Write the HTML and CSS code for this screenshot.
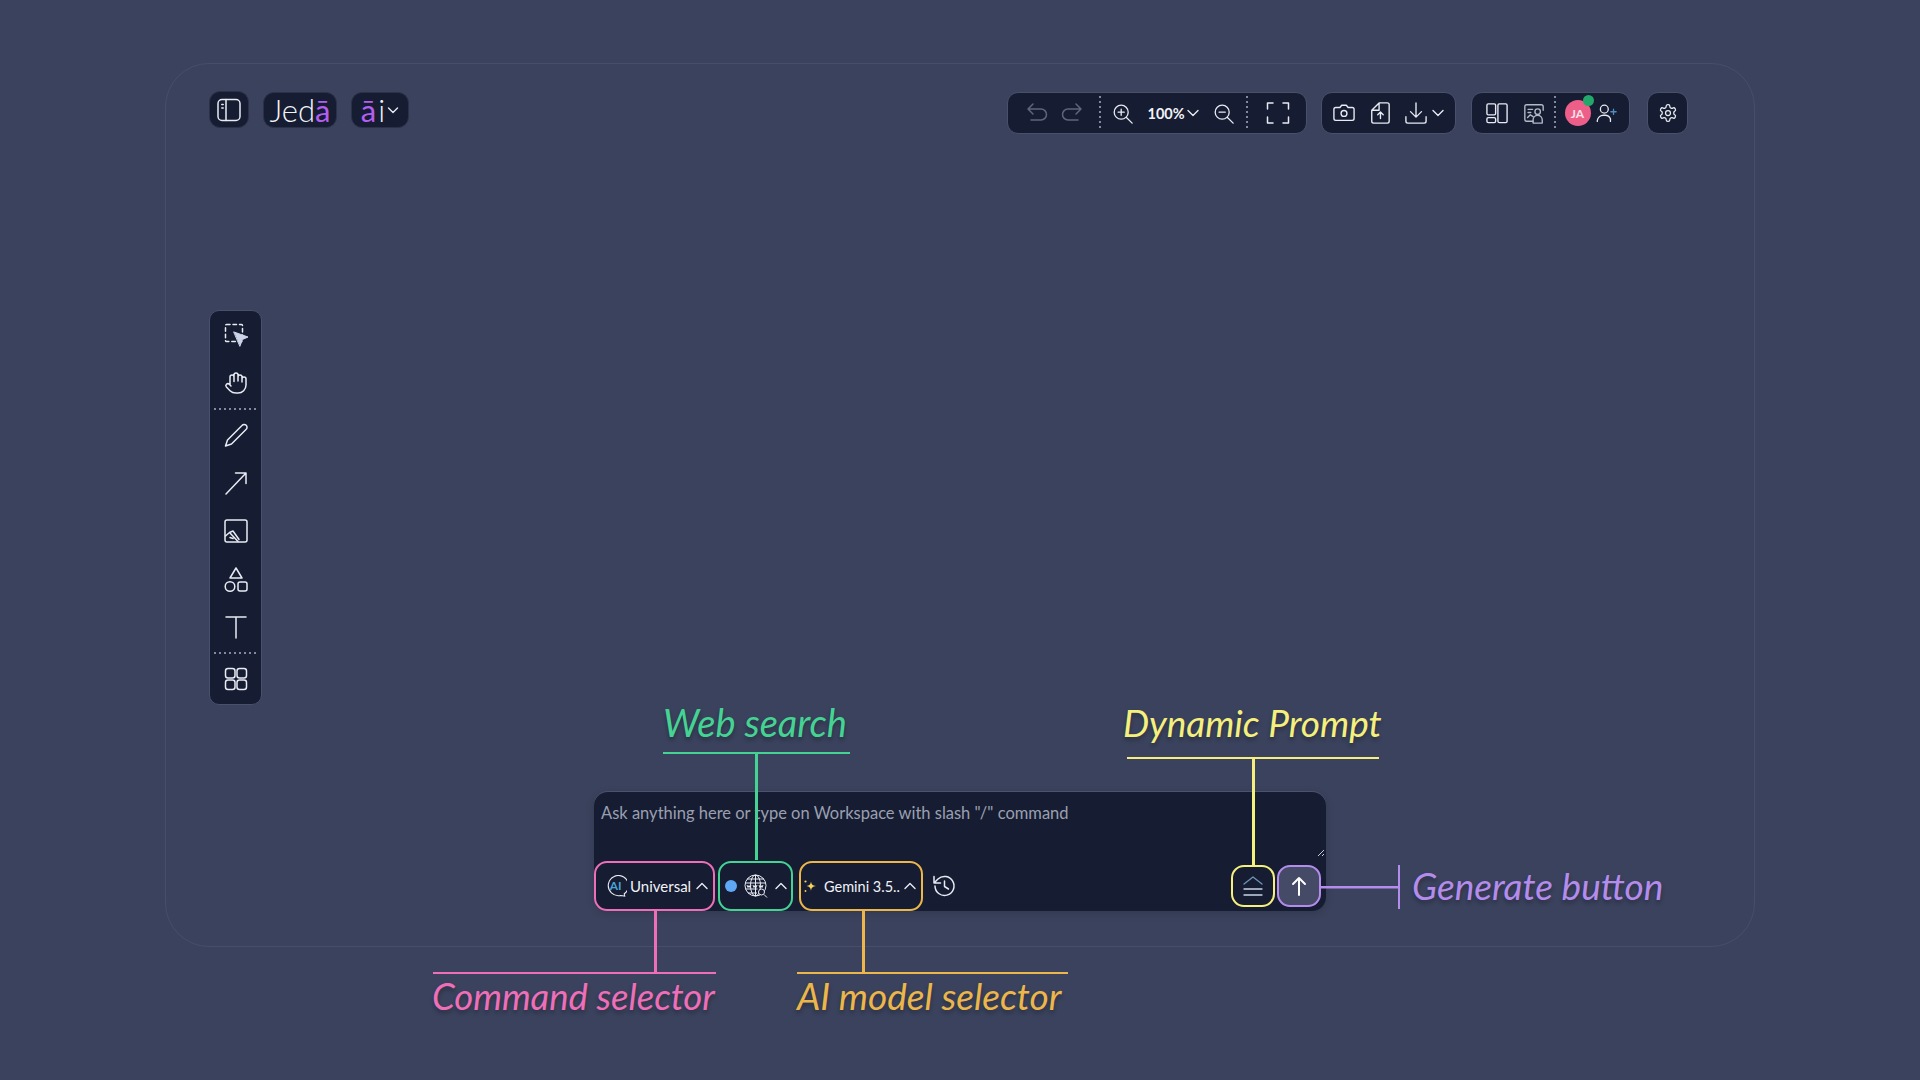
FILE: index.html
```html
<!DOCTYPE html>
<html lang="en">
<head>
  <meta charset="UTF-8" />
  <title>Jedā workspace</title>
  <link rel="stylesheet" href="styles.css">
</head>
<body>
  <div class="frame">

    <div class="header">
      <div class="header-left">
        <div class="panel square">
          <svg class="icon" viewBox="0 0 24 24"><rect x="1" y="1.500" width="22" height="21" rx="4"/><path d="M9 1.500v21M4.800 6.500h1.400M4.800 10h1.400"/></svg>
        </div>
        <div class="panel logo">Jed<span class="accent">ā</span></div>
        <div class="panel logo-ai"><span class="accent">ā</span>i
          <svg class="chev" viewBox="0 0 12 12"><path d="M1.500 4l4.500 4.500L10.500 4"/></svg>
        </div>
      </div>

      <div class="header-right">
        <div class="panel group group-view">
          <svg class="icon dim" viewBox="0 0 24 24"><path d="M8 3L3 8l5 5M3 8h13a5 5 0 0 1 0 11H6"/></svg>
          <svg class="icon dim redo" viewBox="0 0 24 24"><path d="M16 3l5 5-5 5M21 8H8a5 5 0 0 0 0 11h10"/></svg>
          <span class="sep"></span>
          <svg class="icon zoom" viewBox="0 0 24 24"><circle cx="10.500" cy="10.500" r="8"/><path d="M16.500 16.500L23 23M10.500 7v7M7 10.500h7"/></svg>
          <span class="zoom-value">100%</span>
          <svg class="chev" viewBox="0 0 12 12"><path d="M1 3.500L6 8.500l5-5"/></svg>
          <svg class="icon zoom zoom-out" viewBox="0 0 24 24"><circle cx="10.500" cy="10.500" r="8"/><path d="M16.500 16.500L23 23M7 10.500h7"/></svg>
          <span class="sep sep-end"></span>
          <svg class="icon" viewBox="0 0 24 24"><path d="M7 2H1.500v6M17 2h5.500v6M1.500 16v6H7M22.500 16v6H17"/></svg>
        </div>

        <div class="panel group group-file">
          <svg class="icon small" viewBox="0 0 24 24"><path d="M1 8a2 2 0 0 1 2-2h4.500l2-2.500h5l2 2.500H21a2 2 0 0 1 2 2v10a2 2 0 0 1-2 2H3a2 2 0 0 1-2-2z"/><circle cx="12" cy="12.500" r="3.200"/></svg>
          <svg class="icon tall" viewBox="0 0 24 24"><path d="M11 1H20a2 2 0 0 1 2 2v18a2 2 0 0 1-2 2H5a2 2 0 0 1-2-2V9zM11 1v8H3M12.500 18v-7M9.500 14l3-3 3 3"/></svg>
          <svg class="icon small" viewBox="0 0 24 24"><path d="M12 1v15M6 10.500l6 6 6-6M1 16v5a2 2 0 0 0 2 2h18a2 2 0 0 0 2-2v-5"/></svg>
          <svg class="chev" viewBox="0 0 12 12"><path d="M1 3.500L6 8.500l5-5"/></svg>
        </div>

        <div class="panel group group-people">
          <svg class="icon small" viewBox="0 0 24 24"><rect x="1" y="2" width="9.500" height="12" rx="1.500"/><rect x="1" y="17" width="9.500" height="5.500" rx="1.500"/><rect x="13" y="2" width="10" height="20.500" rx="1.500"/></svg>
          <svg class="icon small dimmer" viewBox="0 0 24 24"><path d="M11 21H4a2 2 0 0 1-2-2V5a2 2 0 0 1 2-2h16a2 2 0 0 1 2 2v4M5.500 8h5M5.500 11.500h3M5 17l3-3 3 2"/><circle cx="16" cy="10.500" r="3"/><path d="M11 23v-3.500a5 5 0 0 1 10 0V23z"/></svg>
          <span class="sep"></span>
          <div class="avatar">JA<span class="status"></span></div>
          <svg class="icon add-user" viewBox="0 0 24 24"><circle cx="9.500" cy="7" r="4.500"/><path d="M1.500 21v-1a7 7 0 0 1 7-6h2a7 7 0 0 1 6 4v3"/><path class="plus" d="M20 7v6M17 10h6"/></svg>
        </div>

        <div class="panel square-wide">
          <svg class="icon gear" viewBox="0 0 24 24"><path d="M12.220 2h-.440a2 2 0 0 0-2 2v.180a2 2 0 0 1-1 1.730l-.430.250a2 2 0 0 1-2 0l-.150-.080a2 2 0 0 0-2.730.730l-.220.380a2 2 0 0 0 .730 2.730l.150.100a2 2 0 0 1 1 1.720v.510a2 2 0 0 1-1 1.740l-.150.090a2 2 0 0 0-.730 2.730l.220.380a2 2 0 0 0 2.730.730l.150-.080a2 2 0 0 1 2 0l.430.250a2 2 0 0 1 1 1.730V20a2 2 0 0 0 2 2h.440a2 2 0 0 0 2-2v-.180a2 2 0 0 1 1-1.730l.430-.250a2 2 0 0 1 2 0l.150.080a2 2 0 0 0 2.730-.730l.220-.390a2 2 0 0 0-.730-2.730l-.150-.080a2 2 0 0 1-1-1.740v-.500a2 2 0 0 1 1-1.740l.150-.090a2 2 0 0 0 .730-2.730l-.220-.380a2 2 0 0 0-2.730-.730l-.150.080a2 2 0 0 1-2 0l-.430-.250a2 2 0 0 1-1-1.730V4a2 2 0 0 0-2-2z"/><circle cx="12" cy="12" r="3"/></svg>
        </div>
      </div>
    </div>

    <div class="sidebar panel">
      <div class="side-item">
        <svg class="icon" viewBox="0 0 24 24"><rect x="1.500" y="1.500" width="17" height="17" rx="1" stroke-dasharray="3.500 3"/><path class="solid" d="M10 9l14 5-5.500 2.500L16 23z"/></svg>
      </div>
      <div class="side-item">
        <svg class="icon" viewBox="0 0 24 24"><path d="M18 11V6a2 2 0 0 0-2-2 2 2 0 0 0-2 2M14 10V4a2 2 0 0 0-2-2 2 2 0 0 0-2 2v2M10 10.500V6a2 2 0 0 0-2-2 2 2 0 0 0-2 2v8M18 8a2 2 0 1 1 4 0v6a8 8 0 0 1-8 8h-2c-2.800 0-4.500-.860-5.990-2.340l-3.600-3.600a2 2 0 0 1 2.830-2.820L7 15"/></svg>
      </div>
      <div class="side-sep"></div>
      <div class="side-item">
        <svg class="icon" viewBox="0 0 24 24"><path d="M18 2.500a2.850 2.830 0 1 1 4 4L7.500 21 1.500 23l2-6z"/></svg>
      </div>
      <div class="side-item">
        <svg class="icon" viewBox="0 0 24 24"><path d="M2 23L22 2M11.500 2H22v10.500"/></svg>
      </div>
      <div class="side-item">
        <svg class="icon" viewBox="0 0 24 24"><rect x="1" y="1" width="22" height="22" rx="2"/><path d="M1.500 17l4-3.500 8.500 9M5.500 13.500l3.500-1.500 6 8.500M6 18.500l3 1"/></svg>
      </div>
      <div class="side-item">
        <svg class="icon shapes" viewBox="0 0 24 26"><path d="M12 1.500l6 10H6z"/><circle cx="6" cy="20" r="4.800"/><rect x="14" y="15.500" width="9" height="9" rx="2"/></svg>
      </div>
      <div class="side-item">
        <svg class="icon" viewBox="0 0 24 24"><path d="M2 2h20M12 2v21"/></svg>
      </div>
      <div class="side-sep"></div>
      <div class="side-item">
        <svg class="icon" viewBox="0 0 24 24"><rect x="1.500" y="1.500" width="9.500" height="9.500" rx="2.500"/><rect x="13" y="1.500" width="9.500" height="9.500" rx="2.500"/><rect x="1.500" y="13" width="9.500" height="9.500" rx="2.500"/><rect x="13" y="13" width="9.500" height="9.500" rx="2.500"/></svg>
      </div>
    </div>

    <div class="prompt">
      <div class="prompt-text">Ask anything here or type on Workspace with slash "/" command</div>
      <svg class="resize" viewBox="0 0 8 8"><path d="M1 7l6-6M5 7l2-2"/></svg>
      <div class="prompt-row">
        <div class="pill pill-command">
          <svg class="ai-badge" viewBox="0 0 24 24">
            <path d="M21 20.500A11 11 0 1 0 17 22.300L21.500 23z"/>
            <text x="11.500" y="16.500" text-anchor="middle">AI</text>
          </svg>
          <span>Universal</span>
          <svg class="chev" viewBox="0 0 12 12"><path d="M1 8.500L6 3.500l5 5"/></svg>
        </div>
        <div class="pill pill-web">
          <span class="dot"></span>
          <svg class="globe" viewBox="0 0 24 24"><circle cx="11.500" cy="11.500" r="10.500"/><path d="M11.500 1v21M3 5h17M1.500 9h20M1.500 15h12M4 19h9"/><ellipse cx="11.500" cy="11.500" rx="5" ry="10.500"/><path class="www" d="M3 11l1 2.500 1-2 1 2 1-2.500M9 11l1 2.500 1-2 1 2 1-2.500M15 11l1 2.500 1-2 1 2 1-2.500"/><circle class="lens" cx="17.500" cy="18" r="3"/><path d="M20 20.500l3 3"/></svg>
          <svg class="chev" viewBox="0 0 12 12"><path d="M1 8.500L6 3.500l5 5"/></svg>
        </div>
        <div class="pill pill-model">
          <svg class="sparkle" viewBox="0 0 14 14"><path d="M8 2.500c.5 3 1.500 4 5 4.500-3.500.5-4.500 1.500-5 5-.5-3.500-1.500-4.500-4.500-5 3-.5 4-1.500 4.500-4.500z"/><circle cx="2.500" cy="2.500" r="1.100"/><circle cx="2.500" cy="12" r=".9"/></svg>
          <span class="model-name">Gemini 3.5..</span>
          <svg class="chev" viewBox="0 0 12 12"><path d="M1 8.500L6 3.500l5 5"/></svg>
        </div>
        <svg class="icon history" viewBox="0 0 24 24"><path d="M3 12a9.500 9.500 0 1 0 3-7L2 9M2 2.500V9h6.500M12.500 7v5.500l4 2.500"/></svg>
        <div class="prompt-actions">
          <div class="action action-dynamic">
            <svg class="icon" viewBox="0 0 24 24"><path class="chevron-blue" d="M3 10l9-7 9 7"/><path d="M3 15h18M3 21h18"/></svg>
          </div>
          <div class="action action-generate">
            <svg class="icon" viewBox="0 0 24 24"><path d="M12 21V4M6 10l6-6 6 6"/></svg>
          </div>
        </div>
      </div>
    </div>

    <!-- callouts on top of the prompt box -->
    <div class="note note-web">Web search</div>
    <div class="stem stem-web"></div>
    <div class="note note-dynamic">Dynamic Prompt</div>
    <div class="stem stem-dynamic"></div>
    <div class="note note-command">Command selector</div>
    <div class="stem stem-command"></div>
    <div class="note note-model">AI model selector</div>
    <div class="stem stem-model"></div>
    <div class="generate-link"></div>
    <div class="note note-generate">Generate button</div>

  </div>
</body>
</html>
```

FILE: styles.css
```css
* {
  box-sizing: border-box;
}

body {
  font-family: Lato, "Open Sans", sans-serif;
  margin: 0;
  padding: 63px 0 0 165px;
  width: 1920px;
  height: 1080px;
  overflow: hidden;
  background-color: #3a425d;
}

.frame {
  position: relative;
  width: 1590px;
  height: 884px;
  padding: 28px 66px 0 43px;
  border: 1px solid #464e69;
  border-radius: 44px;
}

.panel {
  display: flex;
  align-items: center;
  background-color: #161c32;
  border: 1px solid #49506c;
  border-radius: 11px;
  color: #f2f3f7;
}

.icon {
  width: 24px;
  height: 24px;
  flex: none;
  fill: none;
  stroke: #e8ebf2;
  stroke-width: 1.500;
  stroke-linecap: round;
  stroke-linejoin: round;
}

.icon.dim {
  stroke: #5f667c;
}

.icon.dimmer {
  stroke: #b4b9c6;
}

.icon.small {
  width: 22px;
  height: 22px;
}

.icon.tall {
  width: 22px;
  height: 26px;
}

.chev {
  width: 12px;
  height: 12px;
  flex: none;
  fill: none;
  stroke: #e8ebf2;
  stroke-width: 1.400;
  stroke-linecap: round;
  stroke-linejoin: round;
}

.accent {
  color: #b45ef0;
  font-weight: 400;
}

/* header */
.header {
  display: flex;
  justify-content: space-between;
  align-items: flex-start;
  height: 41px;
}

.header-left {
  display: flex;
  gap: 14px;
}

.square {
  justify-content: center;
  width: 40px;
  height: 37px;
  margin-top: -1px;
  border-color: #2a3149;
}

.logo {
  justify-content: center;
  width: 74px;
  height: 36px;
  font-size: 31px;
  font-weight: 300;
  border-color: #2a3149;
}

.logo-ai {
  justify-content: center;
  gap: 2px;
  width: 58px;
  height: 36px;
  font-size: 31px;
  font-weight: 300;
  border-color: #2a3149;
}

.header-right {
  display: flex;
  gap: 15px;
}

.group {
  height: 42px;
}

.group-view {
  width: 300px;
  margin-right: -1px;
  padding-left: 17px;
}

.redo {
  margin-left: 11px;
}

.zoom {
  width: 21px;
  height: 21px;
}

.sep {
  flex: none;
  width: 1.500px;
  height: 34px;
  margin: 0 11px 0 15px;
  background: repeating-linear-gradient(to bottom, #838aa0 0 2px, transparent 2px 5px);
}

.sep-end {
  margin: 0 18px 0 12px;
}

.zoom-value {
  flex: none;
  width: 34px;
  margin: 0 5.500px 0 15px;
  font-size: 14.500px;
  font-weight: 700;
  white-space: nowrap;
}

.zoom-out {
  margin-left: 14px;
}

.group-file {
  width: 135px;
  padding-left: 11px;
  gap: 14px;
}

.group-file .chev {
  margin-left: -9px;
}

.group-people {
  width: 159px;
  margin-right: 2px;
  padding-left: 14px;
  gap: 15px;
}

.group-people .sep {
  margin: 0 -6px;
}

.avatar {
  position: relative;
  display: flex;
  flex: none;
  justify-content: center;
  align-items: center;
  width: 26px;
  height: 26px;
  border-radius: 50%;
  background-color: #ed5f88;
  color: #fbe3ea;
  font-size: 12px;
  font-weight: 700;
}

.status {
  position: absolute;
  top: -5px;
  right: -3px;
  width: 11px;
  height: 11px;
  border-radius: 50%;
  background-color: #23a86b;
}

.add-user {
  width: 21px;
  height: 21px;
  margin-left: -9.500px;
}

.add-user .plus {
  stroke: #4f8fc0;
}

.square-wide {
  justify-content: center;
  width: 41px;
  height: 42px;
}

.gear {
  width: 20px;
  height: 20px;
}

/* left toolbar */
.sidebar {
  flex-direction: column;
  width: 53px;
  margin-top: 177px;
  padding: 0 0 1px;
  border-radius: 10px;
}

.side-item {
  display: flex;
  justify-content: center;
  align-items: center;
  width: 100%;
  height: 48px;
}

.shapes {
  height: 27px;
}

.side-sep {
  width: 44px;
  height: 1.500px;
  margin: 1px 0 1.500px;
  background: repeating-linear-gradient(to right, #838aa0 0 2px, transparent 2px 5px);
}

.solid {
  fill: #ccd5e8;
  stroke: #ccd5e8;
  stroke-width: 1;
}

/* prompt box */
.prompt {
  position: relative;
  width: 732px;
  height: 119px;
  margin: 87px 0 0 385px;
  background-color: #161c32;
  border-radius: 14px;
  box-shadow: 0 -1px 0 #4b526c, 0 2px 8px rgba(0, 0, 0, 0.15);
}

.prompt-text {
  height: 69px;
  padding: 10.500px 0 0 7px;
  color: #9aa0b0;
  font-size: 16.500px;
}

.resize {
  position: absolute;
  top: 57px;
  right: 1px;
  width: 8px;
  height: 8px;
  fill: none;
  stroke: #c8ccd6;
  stroke-width: 1;
}

.prompt-row {
  display: flex;
  align-items: center;
  height: 50px;
}

.pill {
  display: flex;
  align-items: center;
  height: 50px;
  border: 2.500px solid;
  border-radius: 13px;
  color: #f2f3f7;
  font-size: 15px;
}

.pill-command {
  width: 121px;
  margin-right: 3px;
  padding-left: 9px;
  gap: 3px;
  border-color: #ee6fb8;
}

.pill-command .chev {
  margin-left: 2px;
}

.pill-web {
  width: 75px;
  margin-right: 6px;
  padding-left: 5px;
  border-color: #45d394;
}

.pill-model {
  width: 124px;
  padding-left: 2px;
  border-color: #ecb64a;
}

.ai-badge {
  flex: none;
  width: 22px;
  height: 22px;
  fill: none;
  stroke: #e8ebf2;
  stroke-width: 1.200;
}

.ai-badge text {
  fill: #4aa3d6;
  stroke: none;
  font-size: 13px;
  font-weight: 700;
}

.dot {
  width: 12px;
  height: 12px;
  margin-right: 7px;
  border-radius: 50%;
  background-color: #5fa8f5;
}

.globe {
  width: 24px;
  height: 24px;
  margin-right: 7px;
  fill: none;
  stroke: #e8ebf2;
  stroke-width: 1;
}

.globe .lens {
  fill: #161c32;
}

.sparkle {
  flex: none;
  width: 14px;
  height: 14px;
  fill: #f4d35e;
}

.model-name {
  margin: 0 4px 0 7px;
  font-size: 14.500px;
  white-space: nowrap;
}

.history {
  margin-left: 9px;
}

.prompt-actions {
  display: flex;
  gap: 2px;
  margin: 0 5px 0 auto;
}

.action {
  display: flex;
  justify-content: center;
  align-items: center;
  width: 44px;
  height: 42px;
  border: 2.500px solid;
  border-radius: 13px;
}

.action-dynamic {
  border-color: #f5f07d;
}

.action-dynamic .icon {
  stroke: #c9d3e8;
  stroke-width: 1.300;
}

.action-dynamic .chevron-blue {
  stroke: #6c94b4;
}

.action-generate {
  background-color: #454a66;
  border-color: #b48cec;
}

.action-generate .icon {
  stroke: #fff;
  stroke-width: 2;
}

/* callouts */
.note {
  position: absolute;
  font-size: 37px;
  font-style: italic;
  font-weight: 400;
  line-height: 44px;
  white-space: nowrap;
  text-shadow: 0 3px 4px rgba(0, 0, 0, 0.3);
}

.stem {
  position: absolute;
  width: 2.500px;
}

.note-web {
  top: 640px;
  left: 497px;
  width: 187px;
  height: 50px;
  font-size: 38px;
  line-height: 37px;
  color: #45d394;
  border-bottom: 2.500px solid #45d394;
}

.stem-web {
  top: 689px;
  left: 589px;
  height: 107px;
  background-color: #45d394;
}

.note-dynamic {
  top: 640px;
  left: 961px;
  width: 252px;
  height: 55px;
  line-height: 38px;
  text-indent: -4px;
  color: #f5f07d;
  border-bottom: 2.500px solid #f5f07d;
}

.stem-dynamic {
  top: 694px;
  left: 1086px;
  height: 107px;
  background-color: #f5f07d;
}

.note-command {
  top: 908px;
  left: 267px;
  width: 283px;
  font-size: 36.500px;
  color: #ee6fb8;
  text-indent: -1px;
  border-top: 2.500px solid #ee6fb8;
}

.stem-command {
  top: 846px;
  left: 488px;
  height: 62px;
  background-color: #ee6fb8;
}

.note-model {
  top: 908px;
  left: 631px;
  width: 271px;
  color: #ecb64a;
  border-top: 2.500px solid #ecb64a;
}

.stem-model {
  top: 846px;
  left: 696px;
  height: 62px;
  background-color: #ecb64a;
}

.generate-link {
  position: absolute;
  top: 801px;
  left: 1155px;
  width: 79px;
  height: 44px;
  border-right: 2.500px solid #b48cec;
  background: linear-gradient(#b48cec, #b48cec) 0 21px / 100% 2.500px no-repeat;
}

.note-generate {
  top: 800px;
  left: 1246px;
  color: #b48cec;
}
```
